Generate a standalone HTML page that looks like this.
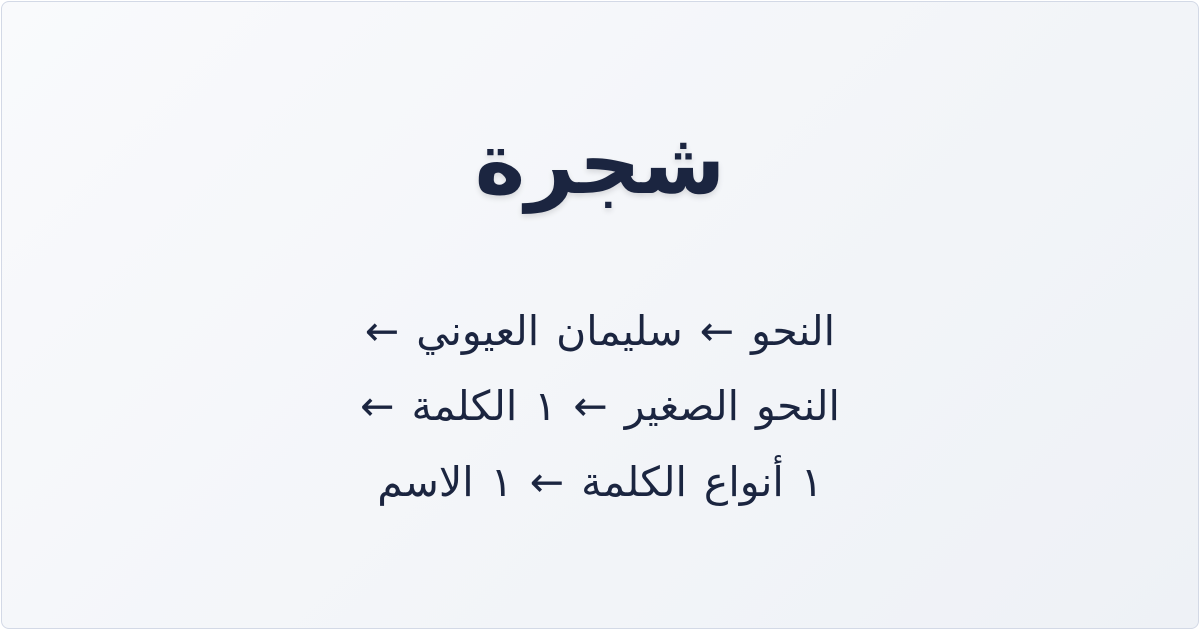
<!DOCTYPE html>
<html lang="ar" dir="rtl">
<head>
<meta charset="utf-8">
<style>
html,body{margin:0;padding:0;}
body{width:1200px;height:630px;overflow:hidden;background:#fff;}
.card{position:absolute;left:1px;top:1px;width:1196px;height:626px;border:1px solid #d3d9e6;border-radius:8px;
background:linear-gradient(135deg,#f9fafc 0%,#eef1f6 100%);}
.t{position:absolute;left:0;width:1200px;text-align:center;color:#1b2540;font-family:"DejaVu Sans",sans-serif;white-space:nowrap;}
.title{top:104px;font-size:86px;font-weight:bold;line-height:120px;text-shadow:0 3px 6px rgba(0,0,0,0.12);}
.l{font-size:41px;line-height:50px;word-spacing:4px;}
</style>
</head>
<body>
<div class="card"></div>
<div class="t title">شجرة</div>
<div class="t l" style="top:306px">النحو ← سليمان العيوني ←</div>
<div class="t l" style="top:381px">النحو الصغير ← ١ الكلمة ←</div>
<div class="t l" style="top:457px">١ أنواع الكلمة ← ١ الاسم</div>
</body>
</html>
